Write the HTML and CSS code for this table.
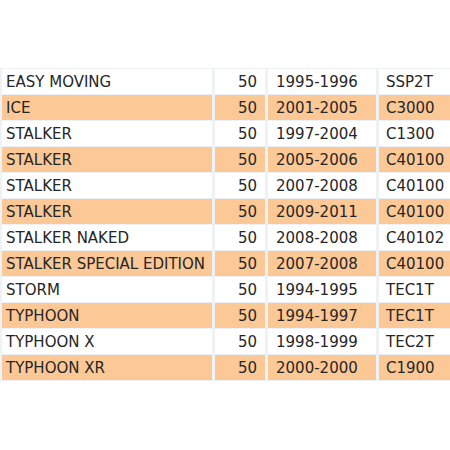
FILE: index.html
```html
<!DOCTYPE html>
<html>
<head>
<meta charset="utf-8">
<link rel="stylesheet" href="styles.css">
</head>
<body>
<div class="wrap">
<table class="models">
<colgroup><col class="c1"><col class="c2"><col class="c3"><col class="c4"></colgroup>
<tr><td class="name">EASY MOVING</td><td class="cc">50</td><td class="yr">1995-1996</td><td class="code">SSP2T</td></tr>
<tr class="alt"><td class="name">ICE</td><td class="cc">50</td><td class="yr">2001-2005</td><td class="code">C3000</td></tr>
<tr><td class="name">STALKER</td><td class="cc">50</td><td class="yr">1997-2004</td><td class="code">C1300</td></tr>
<tr class="alt"><td class="name">STALKER</td><td class="cc">50</td><td class="yr">2005-2006</td><td class="code">C40100</td></tr>
<tr><td class="name">STALKER</td><td class="cc">50</td><td class="yr">2007-2008</td><td class="code">C40100</td></tr>
<tr class="alt"><td class="name">STALKER</td><td class="cc">50</td><td class="yr">2009-2011</td><td class="code">C40100</td></tr>
<tr><td class="name">STALKER NAKED</td><td class="cc">50</td><td class="yr">2008-2008</td><td class="code">C40102</td></tr>
<tr class="alt"><td class="name">STALKER SPECIAL EDITION</td><td class="cc">50</td><td class="yr">2007-2008</td><td class="code">C40100</td></tr>
<tr><td class="name">STORM</td><td class="cc">50</td><td class="yr">1994-1995</td><td class="code">TEC1T</td></tr>
<tr class="alt"><td class="name">TYPHOON</td><td class="cc">50</td><td class="yr">1994-1997</td><td class="code">TEC1T</td></tr>
<tr><td class="name">TYPHOON X</td><td class="cc">50</td><td class="yr">1998-1999</td><td class="code">TEC2T</td></tr>
<tr class="alt"><td class="name">TYPHOON XR</td><td class="cc">50</td><td class="yr">2000-2000</td><td class="code">C1900</td></tr>
</table>
</div>
</body>
</html>
```
FILE: styles.css
```css
html, body {
  margin: 0;
  padding: 0;
  background: #ffffff;
  overflow: hidden;
}
.wrap {
  width: 450px;
  height: 450px;
  overflow: hidden;
  padding-top: 68px;
  box-sizing: border-box;
}
.models {
  border-collapse: separate;
  border-spacing: 3px 1px;
  background: #eef1f5;
  margin-left: -1px;
  table-layout: fixed;
  width: 472px;
  font-family: "DejaVu Sans", sans-serif;
  font-size: 15px;
  color: #262626;
}
.c1 { width: 210px; }
.c2 { width: 50px; }
.c3 { width: 108px; }
.c4 { width: 92px; }
.models td {
  height: 25px;
  box-sizing: border-box;
  padding: 2px 0 0 0;
  background: #ffffff;
  white-space: nowrap;
  overflow: hidden;
  vertical-align: middle;
  line-height: 23px;
}
.models tr.alt td {
  background: #fcc896;
}
.name { padding-left: 4px !important; }
.cc { text-align: right; padding-right: 8px !important; }
.yr { padding-left: 8px !important; }
.code { padding-left: 7px !important; }
```
